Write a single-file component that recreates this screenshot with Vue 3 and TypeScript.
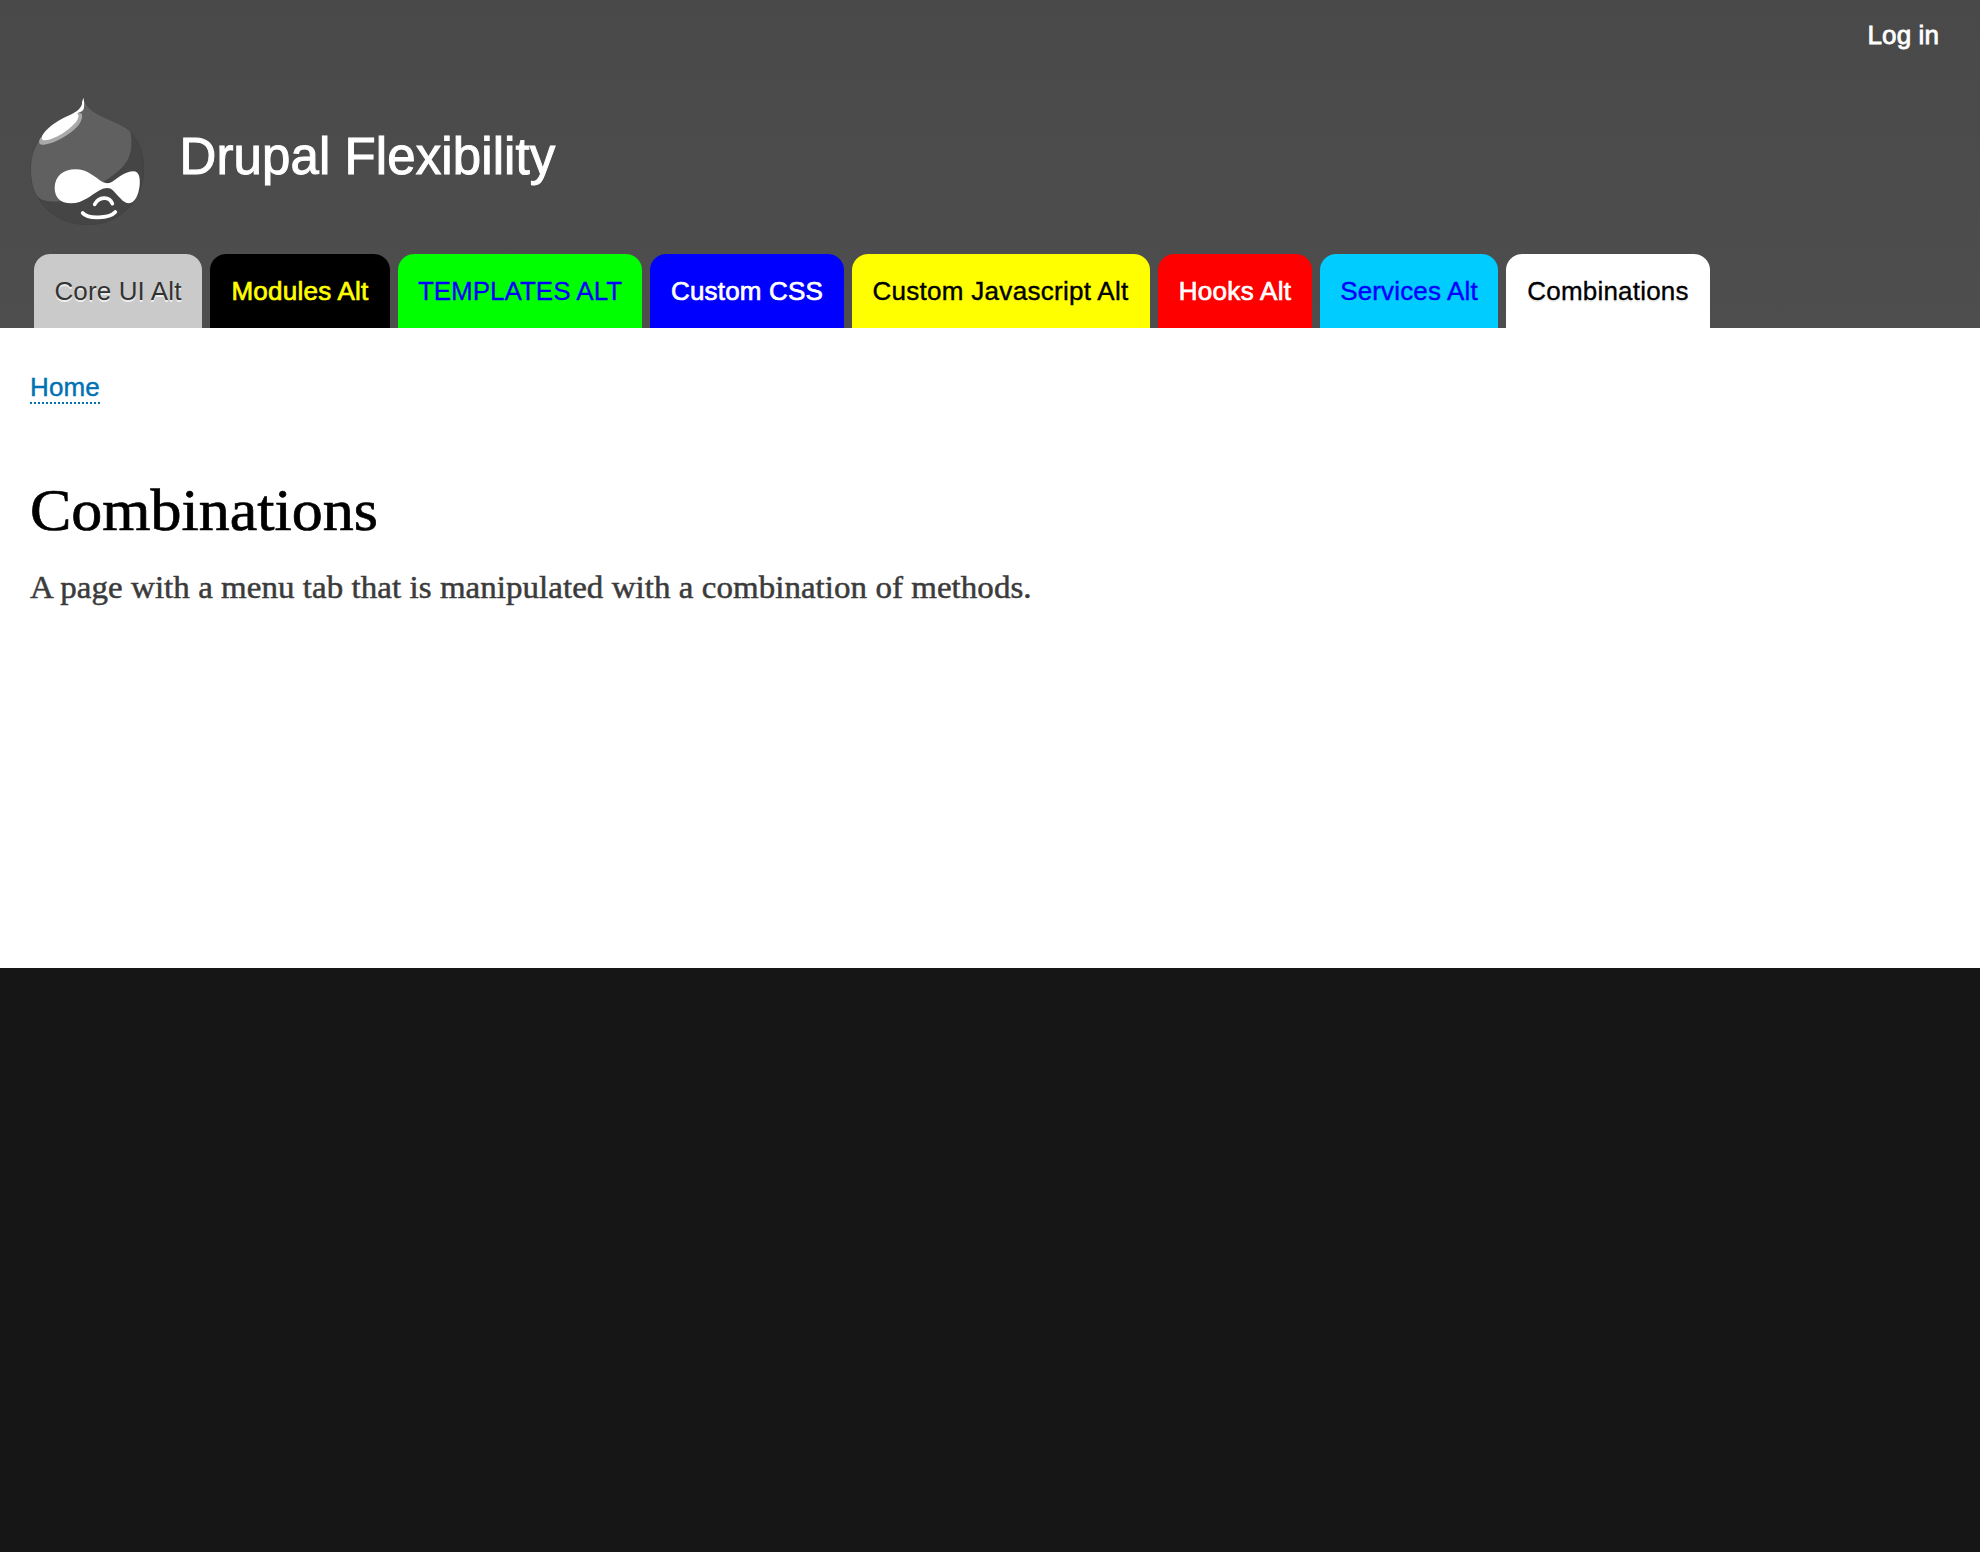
<script setup lang="ts">
interface Tab {
  label: string
  kind: string
  width: number
  spacing: number
}

const tabs: Tab[] = [
  { label: 'Core UI Alt', kind: 'core', width: 168, spacing: 0.13 },
  { label: 'Modules Alt', kind: 'modules', width: 180, spacing: 0.25 },
  { label: 'TEMPLATES ALT', kind: 'templates', width: 244, spacing: 0 },
  { label: 'Custom CSS', kind: 'css', width: 194, spacing: 0.17 },
  { label: 'Custom Javascript Alt', kind: 'javascript', width: 297, spacing: 0.29 },
  { label: 'Hooks Alt', kind: 'hooks', width: 154, spacing: 0.3 },
  { label: 'Services Alt', kind: 'services', width: 178, spacing: 0.15 },
  { label: 'Combinations', kind: 'active', width: 204, spacing: 0.2 },
]
</script>

<template>
  <div class="page">
    <header class="header">
      <nav class="user-menu"><a>Log in</a></nav>
      <div class="branding">
        <svg class="logo" viewBox="0 0 420 435" aria-hidden="true">
          <path fill="#454545" stroke="#3e3e3e" stroke-width="2" d="M190 25C198 50 211 62 244 79C289 102 315 109 334 129C358 158 371 190 371 238C371 332 300 404 205 404C137 404 84 374 56 325C38 300 33 268 33 236C33 198 44 170 61 146C84 109 122 85 160 73C180 61 190 47 190 25Z" />
          <path fill="#606060" d="M190 25C198 50 211 62 244 79C284 99 314 107 331 126C335 142 335 163 333 176C328 223 289 251 249 276L206 325L120 334C91 336 69 334 54 321C38 300 33 268 33 236C33 198 44 170 61 146C84 109 122 85 160 73C180 61 190 47 190 25Z" />
          <path fill="#a9a9a9" d="M62 143C54 154 56 166 72 164C107 160 147 135 170 112C184 98 190 79 184 70L170 68Z" />
          <path fill="#fff" d="M190 23C194 37 193 53 190 59C185 67 175 66 171 70C179 75 175 87 168 96C145 123 104 148 76 151C66 152 62 144 68 134C88 106 121 87 156 72C177 62 188 47 186 37Z" />
          <path fill="#fff" d="M104 294C104 258 131 238 166 238C204 238 225 263 248 276C257 281 269 281 279 274C298 260 318 244 340 244C357 244 361 263 359 286C356 315 344 340 327 340C310 340 294 316 280 302C268 291 255 293 239 301C212 315 191 340 153 340C121 340 104 322 104 294Z" />
          <path fill="none" stroke="#fff" stroke-width="11" stroke-linecap="round" d="M224 343C236 320 268 317 277 341M188 369C203 388 268 386 286 366" />
        </svg>
        <div class="site-name">Drupal Flexibility</div>
      </div>
      <nav class="tabs">
        <a
          v-for="tab in tabs"
          :key="tab.label"
          class="tab"
          :class="tab.kind"
          :style="{ width: tab.width + 'px', letterSpacing: tab.spacing + 'px' }"
        >{{ tab.label }}</a>
      </nav>
    </header>
    <main class="main">
      <div class="breadcrumb"><a>Home</a></div>
      <h1>Combinations</h1>
      <p>A page with a menu tab that is manipulated with a combination of methods.</p>
    </main>
    <footer class="footer"></footer>
  </div>
</template>

<style>
body {
  margin: 0;
  background: #161616;
}
</style>

<style scoped>
.page {
  display: flex;
  flex-direction: column;
  height: 1552px;
  font: 26px/30px "Liberation Sans", Arial, sans-serif;
}
.header {
  display: flex;
  flex-direction: column;
  box-sizing: border-box;
  height: 328px;
  background: linear-gradient(#494949, #4e4e4e);
}
.user-menu {
  display: flex;
  justify-content: flex-end;
  box-sizing: border-box;
  height: 90px;
  padding: 20px 41px 0 0;
  color: #fff;
  letter-spacing: 0.1px;
  -webkit-text-stroke: 0.8px #fff;
}
.branding {
  display: flex;
  height: 164px;
  padding-left: 20px;
}
.logo {
  width: 140px;
  height: 145px;
}
.site-name {
  margin: 37px 0 0 19.5px;
  height: 60px;
  font-size: 51px;
  line-height: 60px;
  letter-spacing: 0.1px;
  color: #fff;
  white-space: nowrap;
  -webkit-text-stroke: 1px #fff;
}
.tabs {
  display: flex;
  gap: 8px;
  height: 74px;
  padding-left: 34px;
}
.tab {
  box-sizing: border-box;
  flex: none;
  height: 74px;
  padding-top: 22px;
  border-radius: 16px 16px 0 0;
  text-align: center;
  white-space: nowrap;
}
.core {
  background: #cacaca;
  color: #333;
  text-shadow: 0 2px 0 #eee;
}
.modules {
  background: #000;
  color: #ff0;
  -webkit-text-stroke: 0.7px #ff0;
}
.templates {
  background: #0f0;
  color: #00f;
  -webkit-text-stroke: 0.3px #00f;
}
.css {
  background: #00f;
  color: #fff;
  -webkit-text-stroke: 0.7px #fff;
}
.javascript {
  box-sizing: content-box;
  height: 52px;
  padding-right: 1px;
  background: #ff0;
  color: #000;
  -webkit-text-stroke: 0.4px #000;
}
.hooks {
  background: #f00;
  color: #fff;
  -webkit-text-stroke: 0.7px #fff;
}
.services {
  background: #0cf;
  color: #00f;
  -webkit-text-stroke: 0.4px #00f;
}
.active {
  background: #fff;
  color: #000;
  text-shadow: 0 2px 0 #eee;
  -webkit-text-stroke: 0.3px #000;
}
.main {
  box-sizing: border-box;
  height: 640px;
  padding: 44px 30px 0;
  background: #fff;
}
.breadcrumb {
  display: flex;
  height: 32px;
}
.breadcrumb a {
  color: #0071b3;
  border-bottom: 2px dotted #0071b3;
  letter-spacing: 0.15px;
  -webkit-text-stroke: 0.4px #0071b3;
}
h1 {
  margin: 72px 0 0;
  font: 400 58.5px/70px "Liberation Serif", Georgia, serif;
  letter-spacing: 0;
  color: #000;
  transform: scaleX(1.06);
  transform-origin: 0 50%;
  -webkit-text-stroke: 0.7px #000;
}
p {
  margin: 21px 0 0;
  font: 31.4px/42px "Liberation Serif", Georgia, serif;
  letter-spacing: 0.05px;
  color: #3b3b3b;
  white-space: nowrap;
  transform: scaleX(1.05);
  transform-origin: 0 50%;
  -webkit-text-stroke: 0.5px #3b3b3b;
}
.footer {
  flex: 1;
  background: #161616;
}
</style>
